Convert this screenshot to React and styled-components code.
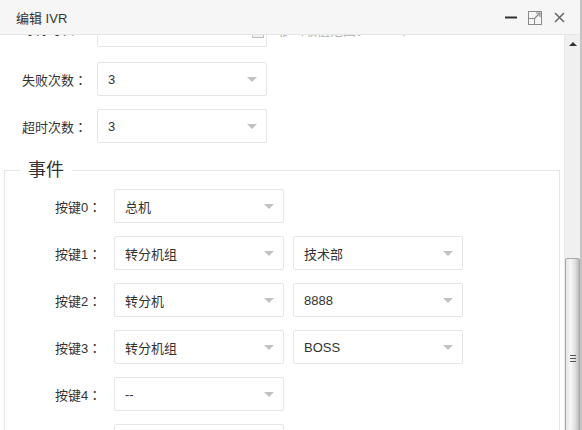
import React from 'react'
import styled, { createGlobalStyle } from 'styled-components'

const GlobalStyle = createGlobalStyle`
  html, body {
    margin: 0;
    padding: 0;
    background: #ffffff;
  }
  body {
    font-family: "Liberation Sans", "Noto Sans CJK SC", sans-serif;
    color: #333;
  }
`;

const topRows = [
  { label: '失败次数', value: '3' },
  { label: '超时次数', value: '3' },
];

const keyRows = [
  { key: '0', action: '总机' },
  { key: '1', action: '转分机组', target: '技术部' },
  { key: '2', action: '转分机', target: '8888' },
  { key: '3', action: '转分机组', target: 'BOSS' },
  { key: '4', action: '--' },
  { key: '5', action: '--' },
  { key: '6', action: '--' },
];

function Select({ value }) {
  return (
    <SelectBox>
      <span>{value}</span>
      <Caret />
    </SelectBox>
  )
}

function App() {
  return (
    <>
      <GlobalStyle />
      <Window>
        <TitleBar>
          <Title>编辑 IVR</Title>
          <Tools>
            <ToolButton aria-label="minimize">
              <svg width="13" height="13" viewBox="0 0 13 13">
                <rect x="0" y="5.5" width="12" height="2" fill="#333" />
              </svg>
            </ToolButton>
            <ToolButton aria-label="maximize">
              <svg width="14" height="14" viewBox="0 0 14 14" fill="none">
                <rect x="0.5" y="0.5" width="13" height="13" stroke="#8a8a8a" />
                <rect x="0.5" y="7.5" width="6" height="6" stroke="#8a8a8a" />
                <path d="M6.5 7.5 L12 2" stroke="#8a8a8a" strokeWidth="1.2" />
                <path d="M8 2 H12 V6" stroke="#8a8a8a" strokeWidth="1.2" />
              </svg>
            </ToolButton>
            <ToolButton aria-label="close">
              <svg width="11" height="11" viewBox="0 0 11 11">
                <path d="M1 1 L10 10 M10 1 L1 10" stroke="#666" strokeWidth="1.5" />
              </svg>
            </ToolButton>
          </Tools>
        </TitleBar>

        <Body>
          <Content>
            <Form>
              <FirstRow>
                <FirstLabel>等待时长<Colon>：</Colon></FirstLabel>
                <NumberInput>
                  <Spinner />
                </NumberInput>
                <Hint>秒（取值范围：1 - 60）</Hint>
              </FirstRow>
              {topRows.map((row) => (
                <FormRow key={row.label}>
                  <Label>{row.label}<Colon>：</Colon></Label>
                  <Select value={row.value} />
                </FormRow>
              ))}

              <Events>
                <Legend>事件</Legend>
                {keyRows.map((row) => (
                  <KeyRow key={row.key}>
                    <KeyLabel>按键{row.key}<Colon>：</Colon></KeyLabel>
                    <Select value={row.action} />
                    {row.target && <Select value={row.target} />}
                  </KeyRow>
                ))}
              </Events>
            </Form>
          </Content>

          <ScrollTrack>
            <ScrollArrow />
            <ScrollThumb>
              <Grip />
            </ScrollThumb>
          </ScrollTrack>
        </Body>
      </Window>
    </>
  )
}

const Window = styled.div`
  width: 582px;
  height: 430px;
  box-sizing: border-box;
  border-right: 2px solid #c4c4c4;
  display: flex;
  flex-direction: column;
  overflow: hidden;
  background: #fff;
`;

const TitleBar = styled.div`
  height: 34px;
  flex-shrink: 0;
  display: flex;
  align-items: center;
  justify-content: space-between;
  padding: 0 14px 0 16px;
  background: #f6f6f6;
  border-bottom: 1px solid #e6e6e6;
`;

const Title = styled.div`
  font-size: 13px;
  color: #333;
`;

const Tools = styled.div`
  display: flex;
  align-items: center;
  gap: 10px;
  padding-top: 1px;
`;

const ToolButton = styled.span`
  display: flex;
  align-items: center;
  justify-content: center;
  width: 14px;
  height: 14px;
`;

const Body = styled.div`
  flex: 1;
  display: flex;
  min-height: 0;
`;

const Content = styled.div`
  flex: 1;
  overflow: hidden;
`;

const Form = styled.div`
  margin-top: -22px;
`;

const FormRow = styled.div`
  display: flex;
  align-items: center;
  padding-left: 22px;
  margin-bottom: 13px;
  font-size: 13px;
`;

const FirstRow = styled(FormRow)`
  margin-bottom: 15px;
`;

const Label = styled.div`
  width: 75px;
  flex-shrink: 0;
  color: #333;
`;

const FirstLabel = styled(Label)`
  margin-top: -3px;
`;

/* full-width colon centred in its em box */
const Colon = styled.span`
  font-family: "Noto Sans CJK TC", sans-serif;
`;

const SelectBox = styled.div`
  width: 170px;
  height: 34px;
  box-sizing: border-box;
  flex-shrink: 0;
  display: flex;
  align-items: center;
  justify-content: space-between;
  padding: 0 9px 0 10px;
  border: 1px solid #e6e6e6;
  border-radius: 2px;
  background: #fff;
  font-size: 13px;
  color: #333;
`;

const Caret = styled.i`
  width: 0;
  height: 0;
  border-left: 5px solid transparent;
  border-right: 5px solid transparent;
  border-top: 5px solid #c2c2c2;
  margin-top: 1px;
`;

const NumberInput = styled.div`
  position: relative;
  width: 170px;
  height: 34px;
  box-sizing: border-box;
  border: 1px solid #e6e6e6;
  border-radius: 2px;
`;

const Spinner = styled.span`
  position: absolute;
  right: 2px;
  bottom: 8px;
  width: 12px;
  height: 14px;
  box-sizing: border-box;
  border: 1px solid #bdbdbd;
  background: #f2f2f2;
`;

const Hint = styled.span`
  margin-left: 11px;
  margin-top: -2px;
  color: #b0b0b0;
  font-size: 13px;
`;

const Events = styled.fieldset`
  margin: 15px 4px 0;
  padding: 7px 0 0;
  border: 1px solid #e6e6e6;
  border-bottom: none;
  min-width: 0;
`;

const Legend = styled.legend`
  margin-left: 15px;
  padding: 0 8px;
  font-size: 18px;
  line-height: 24px;
  color: #333;
`;

const KeyRow = styled.div`
  display: flex;
  align-items: center;
  gap: 9px;
  padding-left: 50px;
  margin-bottom: 13px;
  font-size: 13px;
`;

const KeyLabel = styled.div`
  width: 50px;
  flex-shrink: 0;
  color: #333;
  white-space: nowrap;
`;

const ScrollTrack = styled.div`
  width: 15px;
  flex-shrink: 0;
  background: #f0f0f0;
  border-left: 1px solid #e8e8e8;
  display: flex;
  flex-direction: column;
  align-items: center;
  overflow: hidden;
`;

const ScrollArrow = styled.i`
  margin-top: 7px;
  width: 0;
  height: 0;
  border-left: 4px solid transparent;
  border-right: 4px solid transparent;
  border-bottom: 4px solid #333;
`;

const ScrollThumb = styled.div`
  margin-top: 212px;
  width: 15px;
  height: 200px;
  flex-shrink: 0;
  box-sizing: border-box;
  border: 1px solid #a8a8a8;
  border-radius: 2px;
  background: linear-gradient(to right, #e4e4e4 0%, #f7f7f7 35%, #e0e0e0 70%, #b8b8b8 100%);
  display: flex;
  align-items: center;
  justify-content: center;
`;

const Grip = styled.span`
  width: 6px;
  height: 7px;
  background: repeating-linear-gradient(to bottom, #555 0 1px, transparent 1px 3px);
`;

export default App
